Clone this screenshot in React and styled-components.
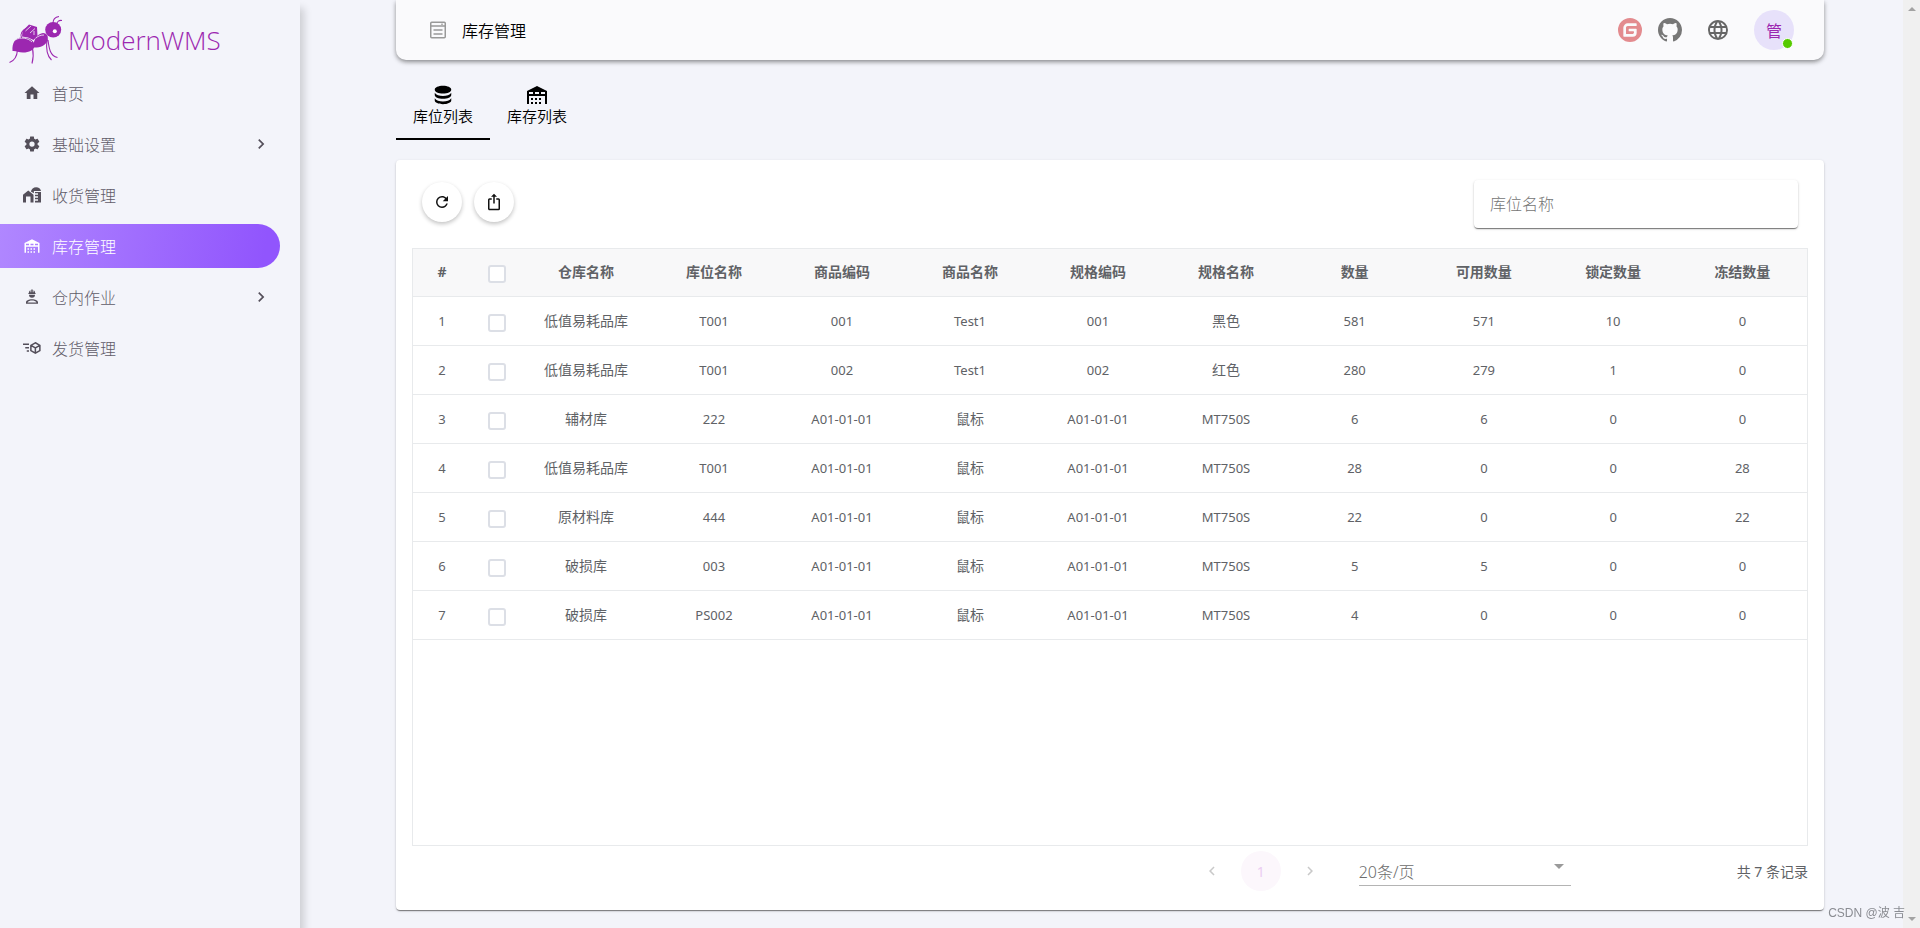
import React from 'react';
import styled, { createGlobalStyle, css } from 'styled-components';

const GlobalStyle = createGlobalStyle`
  *, *::before, *::after { box-sizing: border-box; }
  body {
    margin: 0;
    background: #f3f4fa;
    color: #606266;
    font-family: "Noto Sans", "Noto Sans CJK SC", sans-serif;
    font-size: 14px;
    overflow-x: hidden;
  }
  button, input, select { font: inherit; color: inherit; }
`;

const Page = styled.div`
  display: flex;
  min-height: 100vh;
`;

const Sidebar = styled.aside`
  flex: 0 0 300px;
  box-shadow: 4px 8px 8px rgba(0, 0, 0, 0.16);
`;

const Brand = styled.a`
  display: flex;
  align-items: center;
  gap: 4px;
  height: 67px;
  padding: 12px 0 0 8px;
  color: #9c27b0;
  text-decoration: none;
`;

const BrandName = styled.span`
  font-family: "Open Sans", "Lato", sans-serif;
  font-size: 26px;
  font-weight: 300;
  line-height: 32px;
`;

const Menu = styled.nav`
  display: flex;
  flex-direction: column;
  gap: 7px;
  padding: 4px 20px 0 0;
`;

const MenuItem = styled.a`
  display: flex;
  align-items: center;
  height: 44px;
  padding: 0 9px 0 22px;
  border-radius: 0 22px 22px 0;
  color: #5f5b68;
  font-size: 16px;
  font-weight: 300;
  text-decoration: none;

  svg { flex: none; color: #544f5a; }

  ${(p) => p.$active && css`
    background: linear-gradient(98deg, #b087ff, #9155fd 94%);
    color: #fff;
    svg { color: #fff; }
  `}
`;

const MenuIcon = styled.span`
  display: flex;
  justify-content: center;
  width: 20px;
`;

const MenuLabel = styled.span`
  flex: 1;
  margin-left: 10px;
`;

const Main = styled.main`
  flex: 1;
  min-width: 0;
  padding: 0 79px 18px 96px;
`;

const TopBar = styled.header`
  display: flex;
  align-items: center;
  height: 60px;
  padding: 0 30px 0 33px;
  border-radius: 0 0 10px 10px;
  background: #fafafc;
  box-shadow: 0 2px 4px -1px rgba(0, 0, 0, 0.2), 0 2px 5px rgba(0, 0, 0, 0.32);
`;

const PageTitle = styled.h1`
  flex: 1;
  margin: 0 0 0 15px;
  color: #000;
  font-size: 16px;
  font-weight: 350;
`;

const Actions = styled.div`
  display: flex;
  align-items: center;
  gap: 16px;
`;

const IconLink = styled.a`
  display: flex;
  color: ${(p) => p.$color || '#777'};
`;

const IconButton = styled.button`
  display: flex;
  margin: 0 8px;
  padding: 0;
  border: 0;
  background: none;
  color: #666;
`;

const Avatar = styled.button`
  position: relative;
  width: 40px;
  height: 40px;
  padding: 0;
  border: 0;
  border-radius: 50%;
  background: #e7e1fa;
  color: #9c27b0;
  font-size: 16px;

  &::after {
    content: "";
    position: absolute;
    right: 1px;
    bottom: 1px;
    width: 11px;
    height: 11px;
    border: 1px solid #fff;
    border-radius: 50%;
    background: #56ca00;
  }
`;

const Tabs = styled.div`
  display: flex;
  padding: 12px 0 20px;
`;

const Tab = styled.button`
  display: flex;
  flex-direction: column;
  align-items: center;
  justify-content: center;
  width: 94px;
  height: 68px;
  padding: 0;
  border: 0;
  border-bottom: 2px solid ${(p) => (p.$active ? '#000' : 'transparent')};
  background: none;
  color: #000;
  font-size: 15px;
  font-weight: 350;
  line-height: 20px;
`;

const TabIcon = styled.span`
  display: flex;
  align-items: center;
  height: 22px;
`;

const Card = styled.section`
  padding: 20px 16px 14px;
  border-radius: 4px;
  background: #fff;
  box-shadow: 0 2px 1px -1px rgba(0, 0, 0, 0.3), 0 1px 1px rgba(0, 0, 0, 0.2), 0 1px 3px rgba(0, 0, 0, 0.16);
`;

const Toolbar = styled.div`
  display: flex;
  align-items: flex-start;
  gap: 12px;
  height: 68px;
  padding: 0 10px;
`;

const RoundButton = styled.button`
  display: flex;
  align-items: center;
  justify-content: center;
  width: 40px;
  height: 40px;
  margin-top: 2px;
  padding: 0;
  border: 0;
  border-radius: 50%;
  background: #fff;
  color: #111;
  box-shadow: 0 2px 4px rgba(0, 0, 0, 0.24);
`;

const SearchInput = styled.input`
  width: 324px;
  height: 48px;
  margin-left: auto;
  padding: 0 16px;
  border: 0;
  border-radius: 4px;
  background: #fff;
  box-shadow: 0 2px 1px -1px rgba(0, 0, 0, 0.3), 0 1px 1px rgba(0, 0, 0, 0.24), 0 1px 3px rgba(0, 0, 0, 0.16);
  font-size: 16px;
  outline: 0;

  &::placeholder { color: #757575; opacity: 1; font-weight: 300; }
`;

const TableFrame = styled.div`
  height: 598px;
  border: 1px solid #e8eaec;
`;

const Table = styled.table`
  width: 100%;
  border-collapse: separate;
  border-spacing: 0;
  table-layout: fixed;
`;

const Cell = styled.td`
  width: ${(p) => p.$width || 'auto'};
  height: 49px;
  padding: 0 0 1px;
  border-bottom: 1px solid #e8eaec;
  font-size: ${(p) => (p.$latin ? 13 : 14)}px;
  line-height: 20px;
  text-align: center;
  vertical-align: middle;
`;

const HeadCell = styled(Cell)`
  height: 48px;
  background: #f8f8f9;
  font-weight: 700;
`;

const Checkbox = styled.input`
  display: block;
  appearance: none;
  width: 18px;
  height: 18px;
  margin: 4px auto 0;
  border: 2px solid #dcdfe6;
  border-radius: 3px;
  background: #fff;
`;

const Footer = styled.div`
  display: flex;
  align-items: center;
  height: 50px;
`;

const Pager = styled.nav`
  display: flex;
  align-items: center;
  gap: 9px;
  margin-left: auto;
`;

const PageButton = styled.button`
  display: flex;
  align-items: center;
  justify-content: center;
  width: 40px;
  height: 40px;
  padding: 0;
  border: 0;
  border-radius: 50%;
  background: ${(p) => (p.$current ? '#fcf7fc' : 'none')};
  color: ${(p) => (p.$current ? '#ebcdf2' : '#c9c9c9')};
`;

const SelectBox = styled.div`
  position: relative;
  width: 212px;
  margin: 0 166px 0 29px;
  border-bottom: 1px solid #b4b4b4;
  color: #9a9a9a;
`;

const Select = styled.select`
  display: block;
  width: 100%;
  height: 28px;
  padding: 2px 0 0;
  border: 0;
  appearance: none;
  background: none;
  color: #6c6c6c;
  font-size: 16px;
  font-weight: 300;
  outline: 0;
`;

const Caret = styled.svg`
  position: absolute;
  top: 7px;
  right: 7px;
  pointer-events: none;
`;

const ScrollTrack = styled.div`
  display: flex;
  flex: 0 0 17px;
  flex-direction: column;
  align-items: center;
  justify-content: space-between;
  padding: 7px 0;
  background: #f0f0f0;
  color: #a3a3a3;
`;

const Watermark = styled.div`
  position: fixed;
  right: 15px;
  bottom: 6px;
  color: #8a8c92;
  font-family: "Liberation Sans", "Noto Sans CJK SC", sans-serif;
  font-size: 12px;
  line-height: 18px;
`;

const icons = {
  home: 'M10 20V14H14V20H19V12H22L12 3L2 12H5V20H10Z',
  cog: 'M12,15.5A3.5,3.5 0 0,1 8.5,12A3.5,3.5 0 0,1 12,8.5A3.5,3.5 0 0,1 15.5,12A3.5,3.5 0 0,1 12,15.5M19.43,12.97C19.47,12.65 19.5,12.33 19.5,12C19.5,11.67 19.47,11.34 19.43,11L21.54,9.37C21.73,9.22 21.78,8.95 21.66,8.73L19.66,5.27C19.54,5.05 19.27,4.96 19.05,5.05L16.56,6.05C16.04,5.66 15.5,5.32 14.87,5.07L14.5,2.42C14.46,2.18 14.25,2 14,2H10C9.75,2 9.54,2.18 9.5,2.42L9.13,5.07C8.5,5.32 7.96,5.66 7.44,6.05L4.95,5.05C4.73,4.96 4.46,5.05 4.34,5.27L2.34,8.73C2.21,8.95 2.27,9.22 2.46,9.37L4.57,11C4.53,11.34 4.5,11.67 4.5,12C4.5,12.33 4.53,12.65 4.57,12.97L2.46,14.63C2.27,14.78 2.21,15.05 2.34,15.27L4.34,18.73C4.46,18.95 4.73,19.03 4.95,18.95L7.44,17.94C7.96,18.34 8.5,18.68 9.13,18.93L9.5,21.58C9.54,21.82 9.75,22 10,22H14C14.25,22 14.46,21.82 14.5,21.58L14.87,18.93C15.5,18.67 16.04,18.34 16.56,17.94L19.05,18.95C19.27,19.03 19.54,18.95 19.66,18.73L21.66,15.27C21.78,15.05 21.73,14.78 21.54,14.63L19.43,12.97Z',
  silo: 'M0 11.5L7 6L14 11.5V22H10V14H4V22H0ZM10.5 7.4C11 4 14 1.5 17.5 1.5C21 1.5 23.5 3.5 24 6.5H14.5V9.8ZM16 8H24V22H16V19.5H20V17.5H16V15.5H20V13.5H16V11.5H20V9.5H16Z',
  warehouse: 'M6 19H8V21H6V19M12 3L2 8V21H4V13H20V21H22V8L12 3M8 11H4V9H8V11M14 11H10V9H14V11M20 11H16V9H20V11M6 15H8V17H6V15M10 15H12V17H10V15M10 19H12V21H10V19M14 19H16V21H14V19M14 15H16V17H14V15Z',
  worker: 'M12 15C7.58 15 4 16.79 4 19V21H20V19C20 16.79 16.42 15 12 15M6 19.2C7 17.6 9.5 16.8 12 16.8C14.5 16.8 17 17.6 18 19.2ZM8 9A4 4 0 0 0 12 13A4 4 0 0 0 16 9M11.5 2C11.2 2 11 2.21 11 2.5V5.5H10V3C10 3 7.75 3.86 7.75 6.75C7.75 6.75 7 6.89 7 8H17C16.95 6.89 16.25 6.75 16.25 6.75C16.25 3.86 14 3 14 3V5.5H13V2.5C13 2.21 12.81 2 12.5 2H11.5Z',
  chevronRight: 'M8.59,16.58L13.17,12L8.59,7.41L10,6L16,12L10,18L8.59,16.58Z',
  chevronLeft: 'M15.41,16.58L10.83,12L15.41,7.41L14,6L8,12L14,18L15.41,16.58Z',
  database: 'M12,2C7,2 3,3.8 3,6.2C3,8.6 7,10.4 12,10.4C17,10.4 21,8.6 21,6.2C21,3.8 17,2 12,2M3,9.6V12C3,14.3 7,16.2 12,16.2C17,16.2 21,14.3 21,12V9.6C19.5,12 16,13 12,13C8,13 4.5,12 3,9.6M3,15.6V18C3,20.3 7,22 12,22C17,22 21,20.3 21,18V15.6C19.5,18 16,19 12,19C8,19 4.5,18 3,15.6Z',
  refresh: 'M17.65,6.35C16.2,4.9 14.21,4 12,4A8,8 0 0,0 4,12A8,8 0 0,0 12,20C15.73,20 18.84,17.45 19.73,14H17.65C16.83,16.33 14.61,18 12,18A6,6 0 0,1 6,12A6,6 0 0,1 12,6C13.66,6 15.14,6.69 16.22,7.78L13,11H20V4L17.65,6.35Z',
  exportUp: 'M12,1L8,5H11V14H13V5H16M18,23H6C4.89,23 4,22.1 4,21V9A2,2 0 0,1 6,7H9V9H6V21H18V9H15V7H18A2,2 0 0,1 20,9V21A2,2 0 0,1 18,23Z',
  web: 'M16.36,14C16.44,13.34 16.5,12.68 16.5,12C16.5,11.32 16.44,10.66 16.36,10H19.74C19.9,10.64 20,11.31 20,12C20,12.69 19.9,13.36 19.74,14M14.59,19.56C15.19,18.45 15.65,17.25 15.97,16H18.92C17.96,17.65 16.43,18.93 14.59,19.56M14.34,14H9.66C9.56,13.34 9.5,12.68 9.5,12C9.5,11.32 9.56,10.65 9.66,10H14.34C14.43,10.65 14.5,11.32 14.5,12C14.5,12.68 14.43,13.34 14.34,14M12,19.96C11.17,18.76 10.5,17.43 10.09,16H13.91C13.5,17.43 12.83,18.76 12,19.96M8,8H5.08C6.03,6.34 7.57,5.06 9.4,4.44C8.8,5.55 8.35,6.75 8,8M5.08,16H8C8.35,17.25 8.8,18.45 9.4,19.56C7.57,18.93 6.03,17.65 5.08,16M4.26,14C4.1,13.36 4,12.69 4,12C4,11.31 4.1,10.64 4.26,10H7.64C7.56,10.66 7.5,11.32 7.5,12C7.5,12.68 7.56,13.34 7.64,14M12,4.03C12.83,5.23 13.5,6.57 13.91,8H10.09C10.5,6.57 11.17,5.23 12,4.03M18.92,8H15.97C15.65,6.75 15.19,5.55 14.59,4.44C16.43,5.07 17.96,6.34 18.92,8M12,2C6.47,2 2,6.5 2,12A10,10 0 0,0 12,22A10,10 0 0,0 22,12A10,10 0 0,0 12,2Z',
  github: 'M12 0C5.37 0 0 5.37 0 12c0 5.3 3.44 9.8 8.2 11.39.6.11.82-.26.82-.58v-2.03c-3.34.73-4.04-1.61-4.04-1.61-.55-1.39-1.33-1.76-1.33-1.76-1.09-.74.08-.73.08-.73 1.2.08 1.84 1.24 1.84 1.24 1.07 1.83 2.81 1.3 3.49 1 .11-.78.42-1.31.76-1.61-2.66-.3-5.47-1.33-5.47-5.93 0-1.31.47-2.38 1.24-3.22-.13-.3-.54-1.52.11-3.18 0 0 1.01-.32 3.3 1.23a11.5 11.5 0 0 1 6.01 0c2.29-1.55 3.3-1.23 3.3-1.23.65 1.66.24 2.88.12 3.18.77.84 1.23 1.91 1.23 3.22 0 4.61-2.81 5.62-5.48 5.92.43.37.82 1.1.82 2.22v3.29c0 .32.21.69.82.58A12 12 0 0 0 24 12c0-6.63-5.37-12-12-12Z',
  gitee: 'M11.984 0A12 12 0 0 0 0 12a12 12 0 0 0 12 12 12 12 0 0 0 12-12A12 12 0 0 0 12 0a12 12 0 0 0-.016 0zm6.09 5.333c.328 0 .593.266.592.593v1.482a.594.594 0 0 1-.593.592H9.777c-.982 0-1.778.796-1.778 1.778v5.63c0 .327.266.592.593.592h5.63c.982 0 1.778-.796 1.778-1.778v-.296a.593.593 0 0 0-.592-.593h-4.15a.592.592 0 0 1-.592-.592v-1.482a.593.593 0 0 1 .593-.592h6.815c.327 0 .593.265.593.592v3.408a4 4 0 0 1-4 4H5.926a.593.593 0 0 1-.593-.593V9.778a4.444 4.444 0 0 1 4.445-4.444h8.296z',
};

function Icon({ name, size = 18 }) {
  return (
    <svg width={size} height={size} viewBox="0 0 24 24" fill="currentColor" aria-hidden="true">
      <path d={icons[name]} />
    </svg>
  );
}

function ShippingIcon() {
  return (
    <svg width="18" height="18" viewBox="0 0 24 24" fill="none" stroke="currentColor" strokeWidth="2" aria-hidden="true">
      <path d="M0 7H8M3 11.500H8M5 16H8M16.500 5L22.500 8.500V15.500L16.500 19L10.500 15.500V8.500ZM10.500 8.500L16.500 12L22.500 8.500M16.500 12V19" />
    </svg>
  );
}

function FormIcon() {
  return (
    <svg width="18" height="18" viewBox="0 0 18 18" fill="none" stroke="#999" aria-hidden="true">
      <rect x="1.750" y="1.250" width="14.500" height="15.500" rx="1" strokeWidth="1.500" />
      <path d="M2 5H16M4.500 9H13.500M4.500 13H13.500" strokeWidth="1.400" />
      <path d="M12 3.200H14" />
    </svg>
  );
}

function AntLogo() {
  return (
    <svg width="56" height="50" viewBox="8 15 56 50" fill="none" aria-hidden="true">
      <g fill="#9c27b0">
        <path d="M12.500 51C12 43 15 37.500 22 37.500C30 37.500 34.500 41 34.500 45.500C34.500 50 29 52.500 23 52.500C18 52.500 16 50.500 12.500 51Z" />
        <path d="M33 46.500C34 38 38 33.500 43 33C47.500 33 48.500 37 47.500 40.500C45.500 46 39 48 33 47.500Z" />
        <path d="M22 36.500L22.500 31L29 24.500L37 27L37.500 36L33.500 40L28 37.500Z" />
        <ellipse cx="53.200" cy="29.700" rx="8" ry="7.700" />
      </g>
      <circle cx="54.800" cy="31.300" r="2" fill="#fff" />
      <g stroke="#f3f4fa" strokeWidth="0.800">
        <path d="M15 40C21 36.500 28 38 32 42M25.500 31L31 26M30 33L35 28.500M34 31V35M36 38C38 36 41 35 44 35" />
      </g>
      <g stroke="#9c27b0" strokeWidth="1.100">
        <path d="M17.500 50C17 56 14 61 9.500 62.500M32.500 48C33.500 53 33.500 58 32 63.500M47 39C46 47 46 55 51.500 60M48 40C49 48 50 56 57.500 57.500M53 23C53 19 55.500 17 59 16.500M57 24C57 21.500 59 20 62 20.500M21.500 38C20 34 22 30 27 28" />
      </g>
    </svg>
  );
}

const menu = [
  { label: '首页', icon: <Icon name="home" /> },
  { label: '基础设置', icon: <Icon name="cog" />, more: true },
  { label: '收货管理', icon: <Icon name="silo" /> },
  { label: '库存管理', icon: <Icon name="warehouse" />, active: true },
  { label: '仓内作业', icon: <Icon name="worker" />, more: true },
  { label: '发货管理', icon: <ShippingIcon /> },
];

const columns = ['仓库名称', '库位名称', '商品编码', '商品名称', '规格编码', '规格名称', '数量', '可用数量', '锁定数量', '冻结数量'];
const textColumnCount = 6;

const rows = [
  ['低值易耗品库', 'T001', '001', 'Test1', '001', '黑色', '581', '571', '10', '0'],
  ['低值易耗品库', 'T001', '002', 'Test1', '002', '红色', '280', '279', '1', '0'],
  ['辅材库', '222', 'A01-01-01', '鼠标', 'A01-01-01', 'MT750S', '6', '6', '0', '0'],
  ['低值易耗品库', 'T001', 'A01-01-01', '鼠标', 'A01-01-01', 'MT750S', '28', '0', '0', '28'],
  ['原材料库', '444', 'A01-01-01', '鼠标', 'A01-01-01', 'MT750S', '22', '0', '0', '22'],
  ['破损库', '003', 'A01-01-01', '鼠标', 'A01-01-01', 'MT750S', '5', '5', '0', '0'],
  ['破损库', 'PS002', 'A01-01-01', '鼠标', 'A01-01-01', 'MT750S', '4', '0', '0', '0'],
];

const isLatin = (text) => /^[\w-]+$/.test(text);

export default function App() {
  return (
    <Page>
      <GlobalStyle />
      <Sidebar>
        <Brand href="#">
          <AntLogo />
          <BrandName>ModernWMS</BrandName>
        </Brand>
        <Menu>
          {menu.map((item) => (
            <MenuItem key={item.label} href="#" $active={item.active}>
              <MenuIcon>{item.icon}</MenuIcon>
              <MenuLabel>{item.label}</MenuLabel>
              {item.more && <Icon name="chevronRight" size={20} />}
            </MenuItem>
          ))}
        </Menu>
      </Sidebar>

      <Main>
        <TopBar>
          <FormIcon />
          <PageTitle>库存管理</PageTitle>
          <Actions>
            <IconLink href="#" aria-label="Gitee" $color="#e38b8f"><Icon name="gitee" size={24} /></IconLink>
            <IconLink href="#" aria-label="GitHub"><Icon name="github" size={24} /></IconLink>
            <IconButton aria-label="语言"><Icon name="web" size={24} /></IconButton>
            <Avatar>管</Avatar>
          </Actions>
        </TopBar>

        <Tabs role="tablist">
          <Tab role="tab" aria-selected="true" $active>
            <TabIcon><Icon name="database" size={22} /></TabIcon>
            库位列表
          </Tab>
          <Tab role="tab" aria-selected="false">
            <TabIcon><Icon name="warehouse" size={24} /></TabIcon>
            库存列表
          </Tab>
        </Tabs>

        <Card>
          <Toolbar>
            <RoundButton aria-label="刷新"><Icon name="refresh" /></RoundButton>
            <RoundButton aria-label="导出"><Icon name="exportUp" /></RoundButton>
            <SearchInput type="text" placeholder="库位名称" aria-label="库位名称" />
          </Toolbar>

          <TableFrame>
            <Table>
              <thead>
                <tr>
                  <HeadCell as="th" $width="58px">#</HeadCell>
                  <HeadCell as="th" $width="51px"><Checkbox type="checkbox" aria-label="全选" /></HeadCell>
                  {columns.map((name, c) => (
                    <HeadCell as="th" key={name} $width={c < textColumnCount ? '128px' : undefined}>{name}</HeadCell>
                  ))}
                </tr>
              </thead>
              <tbody>
                {rows.map((row, r) => (
                  <tr key={r}>
                    <Cell $latin>{r + 1}</Cell>
                    <Cell><Checkbox type="checkbox" aria-label={`选择第 ${r + 1} 行`} /></Cell>
                    {row.map((text, c) => (
                      <Cell key={c} $latin={isLatin(text)}>{text}</Cell>
                    ))}
                  </tr>
                ))}
              </tbody>
            </Table>
          </TableFrame>

          <Footer>
            <Pager aria-label="分页">
              <PageButton aria-label="上一页" disabled><Icon name="chevronLeft" /></PageButton>
              <PageButton $current disabled>1</PageButton>
              <PageButton aria-label="下一页" disabled><Icon name="chevronRight" /></PageButton>
            </Pager>
            <SelectBox>
              <Select aria-label="每页条数" defaultValue="20">
                <option value="20">20条/页</option>
              </Select>
              <Caret width="10" height="5" viewBox="0 0 10 5" fill="currentColor" aria-hidden="true">
                <path d="M0 0H10L5 5Z" />
              </Caret>
            </SelectBox>
            <span>共 7 条记录</span>
          </Footer>
        </Card>
      </Main>

      <ScrollTrack aria-hidden="true">
        <svg width="8" height="4" viewBox="0 0 8 4" fill="currentColor"><path d="M4 0L8 4H0Z" /></svg>
        <svg width="8" height="4" viewBox="0 0 8 4" fill="currentColor"><path d="M0 0H8L4 4Z" /></svg>
      </ScrollTrack>
      <Watermark>CSDN @波 吉</Watermark>
    </Page>
  );
}
